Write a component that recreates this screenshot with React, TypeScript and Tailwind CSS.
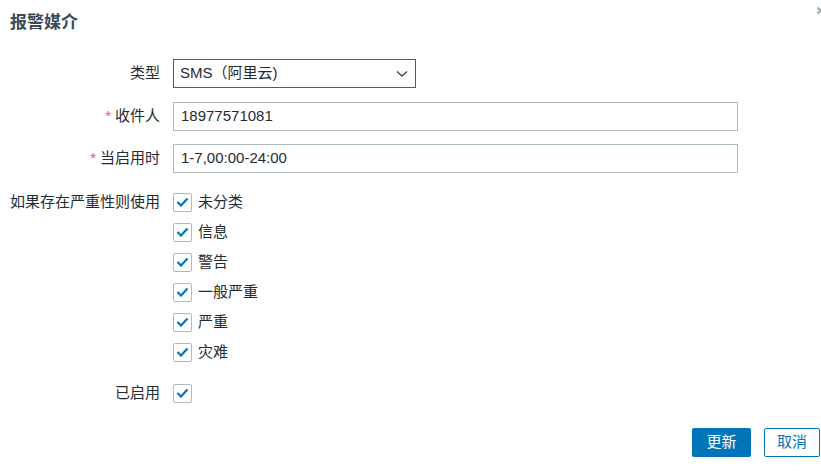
import React from "react";

const font = { fontFamily: '"Liberation Sans", "Noto Sans CJK SC", sans-serif' };

const Check = ({ label }: { label?: string }) => (
  <div className="flex h-[30px] items-center">
    <span className="flex h-[19px] w-[19px] items-center justify-center rounded-[2px] border border-[#acbbc2] bg-white">
      <svg width="13" height="10" viewBox="0 0 13 10" fill="none">
        <path d="M1.5 5l3.5 3.5L11.5 1.5" stroke="#0275b8" strokeWidth="2.2" />
      </svg>
    </span>
    {label && <span className="ml-[6px] text-[15px] text-[#1f2c33]">{label}</span>}
  </div>
);

const Label = ({ text, required }: { text: string; required?: boolean }) => (
  <div className="w-[160px] shrink-0 text-right text-[15px] text-[#1f2c33]">
    {required && <span className="mr-[4px] text-[#e45959]">*</span>}
    {text}
  </div>
);

export default function App() {
  const severities = ["未分类", "信息", "警告", "一般严重", "严重", "灾难"];

  return (
    <div className="relative h-[471px] w-[821px] overflow-hidden bg-white" style={font}>
      <div className="pl-[10px] pt-[12px] text-[17px] font-bold leading-[22px] text-[#3d4b57]">报警媒介</div>
      {/* close icon, mostly cut off at the right edge */}
      <svg className="absolute left-[816px] top-[6px]" width="9" height="9" viewBox="0 0 9 9" fill="none">
        <path d="M1.5 1.5l6 6M7.5 1.5l-6 6" stroke="#9aa7ae" strokeWidth="2" />
      </svg>

      <div className="mt-[25px]">
        <div className="flex h-[29px] items-center">
          <Label text="类型" />
          <div className="ml-[13px] flex h-[29px] w-[243px] items-center justify-between border border-[#0275b8] pl-[6px] pr-[7px] text-[15px] text-[#1f2c33]">
            <span>SMS（阿里云)</span>
            <svg width="12" height="8" viewBox="0 0 12 8" fill="none">
              <path d="M1 1.5l5 4.5 5-4.5" stroke="#3d4b57" strokeWidth="1.4" />
            </svg>
          </div>
        </div>

        <div className="mt-[14px] flex h-[29px] items-center">
          <Label text="收件人" required />
          <div className="ml-[13px] flex h-[29px] w-[565px] items-center border border-[#acbbc2] px-[7px] text-[15px] text-[#1f2c33]">
            18977571081
          </div>
        </div>

        <div className="mt-[13px] flex h-[29px] items-center">
          <Label text="当启用时" required />
          <div className="ml-[13px] flex h-[29px] w-[565px] items-center border border-[#acbbc2] px-[7px] text-[15px] text-[#1f2c33]">
            1-7,00:00-24:00
          </div>
        </div>

        <div className="mt-[14px] flex">
          <div className="flex h-[30px] items-center">
            <Label text="如果存在严重性则使用" />
          </div>
          <div className="ml-[13px] flex flex-col">
            {severities.map((s) => (
              <Check key={s} label={s} />
            ))}
          </div>
        </div>

        <div className="mt-[11px] flex items-center">
          <Label text="已启用" />
          <div className="ml-[13px]">
            <Check />
          </div>
        </div>

        <div className="mt-[20px] flex justify-end gap-[13px] pr-[1px]">
          <button className="h-[29px] w-[59px] rounded-[2px] bg-[#0275b8] text-[15px] text-white">更新</button>
          <button className="h-[29px] w-[56px] rounded-[2px] border border-[#0275b8] bg-white text-[15px] text-[#0275b8]">取消</button>
        </div>
      </div>
    </div>
  );
}
